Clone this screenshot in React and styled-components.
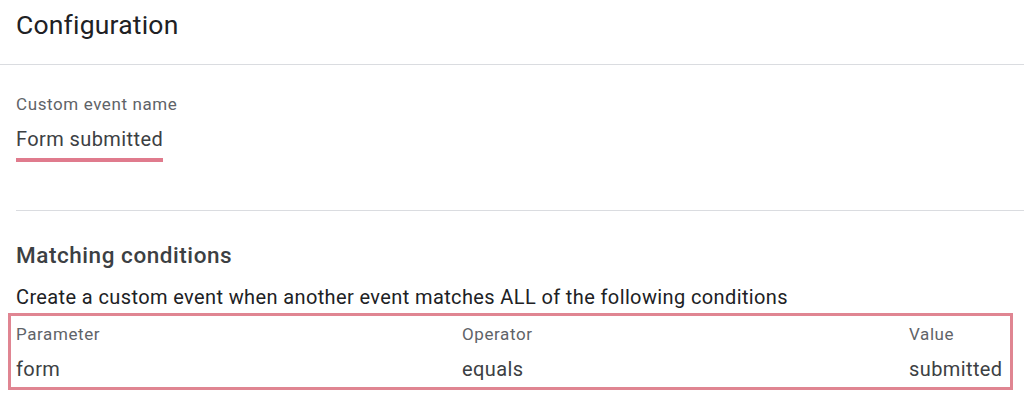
import React from 'react';
import styled, { createGlobalStyle } from 'styled-components';

const GlobalStyle = createGlobalStyle`
  html, body {
    margin: 0;
    padding: 0;
    background: #ffffff;
    font-family: Roboto, "Liberation Sans", Arial, sans-serif;
  }
`;

const Page = styled.div`
  width: 1024px;
  height: 409px;
  overflow: hidden;
  background: #ffffff;
`;

const Header = styled.div`
  height: 65px;
  box-sizing: border-box;
  padding: 8px 16px 0;
  border-bottom: 1px solid #dadce0;
`;

const Title = styled.h1`
  margin: 0;
  font-size: 26.5px;
  line-height: 34px;
  font-weight: 400;
  letter-spacing: 0.2px;
  color: #202124;
`;

const Section = styled.div`
  margin-left: 16px;
  padding-top: ${(p) => p.$top}px;
  height: ${(p) => p.$height}px;
  box-sizing: border-box;
  border-top: ${(p) => (p.$divider ? '1px solid #dadce0' : 'none')};
`;

const Label = styled.div`
  font-size: 17px;
  line-height: 20px;
  letter-spacing: 0.6px;
  color: #5f6368;
`;

const Value = styled.div`
  display: inline-block;
  margin-top: ${(p) => p.$gap || 0}px;
  font-size: 20px;
  line-height: 26px;
  letter-spacing: 0.4px;
  color: #3c4043;
  padding-bottom: ${(p) => (p.$underline ? 6 : 0)}px;
  border-bottom: ${(p) => (p.$underline ? '4px solid #e07b8d' : 'none')};
`;

const Heading = styled.h2`
  margin: 0;
  font-size: 22.5px;
  line-height: 28px;
  font-weight: 500;
  letter-spacing: 0.55px;
  color: #3c4043;
`;

const Description = styled.p`
  margin: 15px 0 0;
  font-size: 20px;
  line-height: 26px;
  letter-spacing: 0.38px;
  color: #202124;
`;

const ConditionBox = styled.div`
  margin: 3px 0 0 -8px;
  width: 1005px;
  box-sizing: border-box;
  border: 3px solid #e08592;
  padding: 8px 9px 5px 5px;
  display: grid;
  grid-template-columns: 446px 447px 1fr;
`;

const Column = styled.div`
  display: flex;
  flex-direction: column;
  align-items: flex-start;
`;

const conditions = [
  { label: 'Parameter', value: 'form' },
  { label: 'Operator', value: 'equals' },
  { label: 'Value', value: 'submitted' },
];

export default function App() {
  return (
    <Page>
      <GlobalStyle />
      <Header>
        <Title>Configuration</Title>
      </Header>
      <Section $top={29} $height={145}>
        <Label>Custom event name</Label>
        <Value $gap={12} $underline>
          Form submitted
        </Value>
      </Section>
      <Section $divider $top={30} $height={200}>
        <Heading>Matching conditions</Heading>
        <Description>
          Create a custom event when another event matches ALL of the following conditions
        </Description>
        <ConditionBox>
          {conditions.map((c) => (
            <Column key={c.label}>
              <Label>{c.label}</Label>
              <Value $gap={12}>{c.value}</Value>
            </Column>
          ))}
        </ConditionBox>
      </Section>
    </Page>
  );
}
